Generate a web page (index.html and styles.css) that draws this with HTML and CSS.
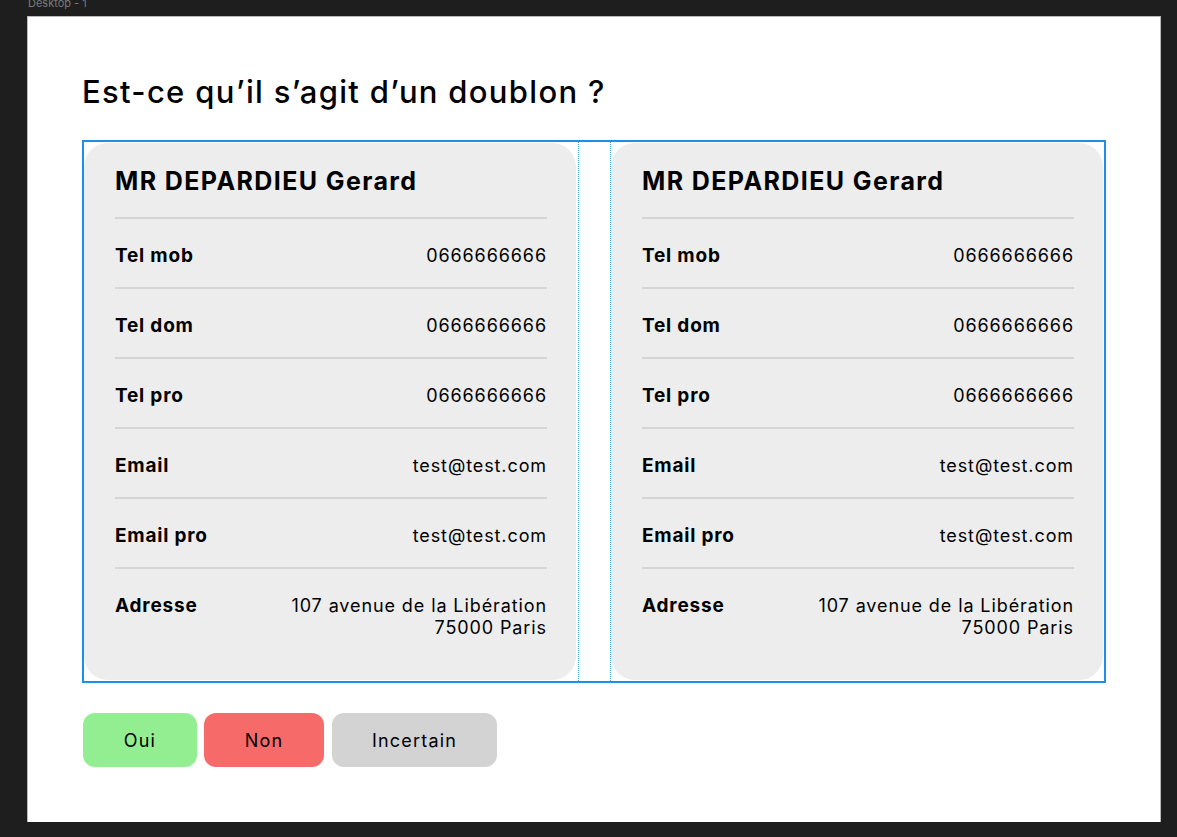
FILE: index.html
```html
<!DOCTYPE html>
<html lang="fr">
<head>
    <meta charset="utf-8">
    <title>Desktop - 1</title>
    <link rel="stylesheet" href="styles.css">
</head>
<body>

<div class="frame-label">Desktop - 1</div>
<div class="frame">
    <h1 class="question">Est-ce qu’il s’agit d’un doublon ?</h1>

    <div class="compare">
        <div class="card">
            <h2 class="card-name">MR DEPARDIEU Gerard</h2>
            <div class="row"><span class="row-label">Tel mob</span><span class="row-value">0666666666</span></div>
            <div class="row"><span class="row-label">Tel dom</span><span class="row-value">0666666666</span></div>
            <div class="row"><span class="row-label">Tel pro</span><span class="row-value">0666666666</span></div>
            <div class="row"><span class="row-label">Email</span><span class="row-value">test@test.com</span></div>
            <div class="row"><span class="row-label">Email pro</span><span class="row-value">test@test.com</span></div>
            <div class="row"><span class="row-label">Adresse</span><span class="row-value">107 avenue de la Libération<br>75000 Paris</span></div>
        </div>
        <div class="gap-guide"></div>
        <div class="card">
            <h2 class="card-name">MR DEPARDIEU Gerard</h2>
            <div class="row"><span class="row-label">Tel mob</span><span class="row-value">0666666666</span></div>
            <div class="row"><span class="row-label">Tel dom</span><span class="row-value">0666666666</span></div>
            <div class="row"><span class="row-label">Tel pro</span><span class="row-value">0666666666</span></div>
            <div class="row"><span class="row-label">Email</span><span class="row-value">test@test.com</span></div>
            <div class="row"><span class="row-label">Email pro</span><span class="row-value">test@test.com</span></div>
            <div class="row"><span class="row-label">Adresse</span><span class="row-value">107 avenue de la Libération<br>75000 Paris</span></div>
        </div>
    </div>

    <div class="actions">
        <button class="btn btn-yes">Oui</button>
        <button class="btn btn-no">Non</button>
        <button class="btn btn-maybe">Incertain</button>
    </div>
</div>

</body>
</html>
```

FILE: styles.css
```css
body {
    margin: 0;
    padding-left: 28px;
    background: #1e1e1e;
    font-family: Inter, "Noto Sans", sans-serif;
    color: #000;
}

.frame-label {
    margin-top: -4px;
    height: 14px;
    margin-bottom: 7px;
    font-size: 11px;
    line-height: 14px;
    color: #7b7b7b;
}

.frame {
    box-sizing: border-box;
    width: 1132px;
    height: 805px;
    padding: 57px 0 0 54px;
    background: #fff;
    box-shadow: 0 0 0 1px #b9b9b9;
}

.question {
    margin: 0 0 30px;
    font-size: 31px;
    line-height: 36px;
    font-weight: 500;
    letter-spacing: 1.3px;
}

.compare {
    display: flex;
    width: 1024px;
    height: 543px;
    box-sizing: border-box;
    border: 2px solid #1e8fe6;
}

.card {
    width: 492px;
    box-sizing: border-box;
    margin: 1px 0;
    padding: 23px 29px 0 31px;
    background: #ededed;
    border-radius: 24px;
}

.gap-guide {
    width: 31px;
    margin-left: 2px;
    border-left: 1px dotted #3f9fea;
    border-right: 1px dotted #3f9fea;
}

.card-name {
    margin: 0 0 21px;
    font-size: 25px;
    line-height: 30px;
    font-weight: 700;
    letter-spacing: 1.4px;
}

.row {
    display: flex;
    justify-content: space-between;
    align-items: flex-start;
    padding: 26px 0 20px;
    border-top: 2px solid #d5d5d5;
    font-size: 18px;
    line-height: 22px;
}

.row-label {
    font-size: 19px;
    font-weight: 700;
    letter-spacing: 0.8px;
}

.row-value {
    text-align: right;
    letter-spacing: 0.9px;
}

.actions {
    display: flex;
    gap: 7px;
    margin-top: 30px;
    padding-left: 1px;
}

.btn {
    height: 54px;
    border: 0;
    border-radius: 12px;
    font-family: inherit;
    font-size: 18px;
    letter-spacing: 1.2px;
    color: #000;
}

.btn-yes {
    width: 114px;
    background: #92ee90;
}

.btn-no {
    width: 120px;
    background: #f76a6a;
}

.btn-maybe {
    width: 165px;
    margin-left: 1px;
    background: #d3d3d3;
}
```
